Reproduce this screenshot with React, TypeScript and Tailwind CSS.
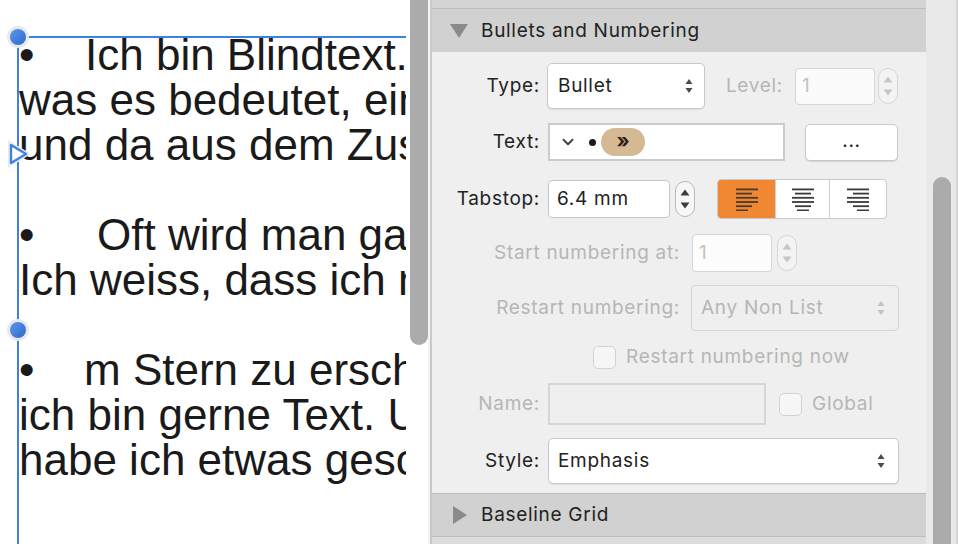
import React from "react";
import { ChevronDown } from "lucide-react";

function UpDown({ color = "#4a4a4a" }: { color?: string }) {
  return (
    <svg width="10" height="18" viewBox="0 0 10 18">
      <path d="M5 2 L8.5 7 L1.5 7 Z" fill={color} />
      <path d="M5 16 L8.5 11 L1.5 11 Z" fill={color} />
    </svg>
  );
}

function Stepper({ disabled }: { disabled?: boolean }) {
  const c = disabled ? "#c6c6c6" : "#3c3c3c";
  return (
    <div
      className={
        disabled
          ? "w-[20px] h-[36px] rounded-full border border-[#d5d5d5] bg-[#f3f3f3] flex flex-col items-center justify-center gap-[6px]"
          : "w-[20px] h-[36px] rounded-full border border-[#b8b8b8] bg-[#f7f7f7] flex flex-col items-center justify-center gap-[6px]"
      }
    >
      <svg width="10" height="7" viewBox="0 0 10 7">
        <path d="M5 0.5 L9.5 6.5 L0.5 6.5 Z" fill={c} />
      </svg>
      <svg width="10" height="7" viewBox="0 0 10 7">
        <path d="M5 6.5 L9.5 0.5 L0.5 0.5 Z" fill={c} />
      </svg>
    </div>
  );
}

function AlignIcon({ kind, color }: { kind: "left" | "center" | "right"; color: string }) {
  const widths = [22, 16, 22, 22, 16, 12];
  return (
    <svg width="24" height="24" viewBox="0 0 24 24">
      {widths.map((w, i) => {
        const x = kind === "left" ? 1 : kind === "right" ? 23 - w : 12 - w / 2;
        return <rect key={i} x={x} y={1.5 + i * 4.2} width={w} height={1.8} fill={color} />;
      })}
    </svg>
  );
}

function Checkbox() {
  return <div className="w-[23px] h-[23px] rounded-[5px] border border-[#d2d2d2] bg-[#f6f6f6]" />;
}

function Handle() {
  return (
    <div className="w-[22px] h-[22px] rounded-full bg-[#e9e9e9] flex items-center justify-center">
      <div className="w-[16px] h-[16px] rounded-full bg-gradient-to-br from-[#5d97ea] to-[#2c68cf]" />
    </div>
  );
}

const lines: { bullet?: number; text: string }[] = [
  { bullet: 66, text: "Ich bin Blindtext. Von Geburt an." },
  { text: "was es bedeutet, ein blinder Text" },
  { text: "und da aus dem Zusammenhang" },
  { text: "" },
  { bullet: 78, text: "Oft wird man gar nicht erst gelesen." },
  { text: "Ich weiss, dass ich nie die Chance" },
  { text: "" },
  { bullet: 65, text: "m Stern zu erscheinen. Aber" },
  { text: "ich bin gerne Text. Und sollten Sie" },
  { text: "habe ich etwas geschafft" },
];

export default function App() {
  const ui = "font-['Inter',sans-serif]";
  return (
    <div className="w-[958px] h-[544px] flex overflow-hidden bg-white">
      {/* Canvas */}
      <div className="w-[410px] h-full relative bg-white">
        <div className="w-[406px] h-full overflow-hidden pt-[32px] pl-[19px] font-['Liberation_Sans',Arial,sans-serif] text-[44px] leading-[45px] text-[#1a1a1a] whitespace-nowrap">
          {lines.map((l, i) => (
            <div key={i} className="h-[45px]">
              {l.bullet ? (
                <span className="inline-block" style={{ width: l.bullet }}>
                  •
                </span>
              ) : null}
              {l.text}
            </div>
          ))}
        </div>
        {/* selection frame overlays */}
        <div className="absolute left-[17px] top-[36px] w-[389px] h-[2px] bg-[#3f80e0]" />
        <div className="absolute left-[17px] top-[36px] w-[2px] h-[508px] bg-[#3f80e0]" />
        <div className="absolute left-[7px] top-[26px]">
          <Handle />
        </div>
        <div className="absolute left-[7px] top-[319px]">
          <Handle />
        </div>
        <div className="absolute left-[6px] top-[139px]">
          <svg width="26" height="30" viewBox="0 0 26 30">
            <path d="M2 1 L25 15 L2 29 Z" fill="#ececec" />
            <path d="M5 6 L20 15 L5 24 Z" fill="#ffffff" stroke="#3f80e0" strokeWidth="2.4" strokeLinejoin="round" />
          </svg>
        </div>
      </div>

      {/* canvas scrollbar */}
      <div className="w-[18px] h-full bg-white">
        <div className="w-[18px] h-[345px] bg-[#ababab] rounded-b-full" />
      </div>
      <div className="w-[2px] h-full bg-[#f2f2f2]" />
      <div className="w-[2px] h-full bg-[#c9c9c9]" />

      {/* Panel */}
      <div className={`w-[494px] h-full flex flex-col bg-[#efefef] ${ui} text-[19px] tracking-[0.7px] text-[#222]`}>
        <div className="h-[9px] shrink-0 bg-[#d4d4d4] border-b border-[#bdbdbd]" />
        <div className="h-[43px] shrink-0 bg-[#d1d1d1] flex items-center">
          <svg width="18" height="16" viewBox="0 0 18 16" className="ml-[18px]">
            <path d="M0 1 L18 1 L9 15 Z" fill="#8a8a8a" />
          </svg>
          <span className="ml-[13px] mt-[1px]">Bullets and Numbering</span>
        </div>

        <div className="flex-1 flex flex-col">
          {/* Type */}
          <div className="mt-[10px] h-[48px] flex items-center">
            <div className="w-[108px] text-right">Type:</div>
            <div className="ml-[7px] w-[158px] h-[46px] bg-white rounded-[5px] border border-[#c9c9c9] shadow-[0_1px_1px_rgba(0,0,0,0.08)] flex items-center pl-[10px] pr-[10px] justify-between">
              <span>Bullet</span>
              <UpDown />
            </div>
            <div className="w-[78px] text-right text-[#b6b6b6]">Level:</div>
            <div className="ml-[12px] w-[80px] h-[37px] bg-[#fbfbfb] rounded-[4px] border border-[#d6d6d6] flex items-center pl-[6px] text-[#c2c2c2]">
              1
            </div>
            <div className="ml-[3px]">
              <Stepper disabled />
            </div>
          </div>

          {/* Text */}
          <div className="mt-[12px] h-[40px] flex items-center">
            <div className="w-[108px] text-right">Text:</div>
            <div className="ml-[8px] w-[237px] h-[38px] bg-white border-2 border-[#cbcbcb] flex items-center pl-[9px]">
              <ChevronDown size={18} strokeWidth={2.6} color="#444" />
              <span className="ml-[12px] w-[7px] h-[7px] rounded-full bg-[#1c1c1c]" />
              <span className="ml-[5px] w-[44px] h-[28px] rounded-full bg-[#d5b994] flex items-center justify-center text-[20px] tracking-normal font-bold leading-none text-[#2a2015] pb-[2px]">
                »
              </span>
            </div>
            <div className="ml-[20px] w-[93px] h-[37px] bg-white rounded-[5px] border border-[#cacaca] shadow-[0_1px_1px_rgba(0,0,0,0.12)] flex items-center justify-center pb-[2px]">
              ...
            </div>
          </div>

          {/* Tabstop */}
          <div className="mt-[17px] h-[40px] flex items-center">
            <div className="w-[108px] text-right">Tabstop:</div>
            <div className="ml-[8px] w-[122px] h-[38px] bg-white rounded-[4px] border border-[#c6c6c6] flex items-center pl-[8px]">
              6.4 mm
            </div>
            <div className="ml-[5px]">
              <Stepper />
            </div>
            <div className="ml-[22px] w-[170px] h-[40px] rounded-[4px] border border-[#c9c9c9] bg-white flex overflow-hidden">
              <div className="w-[57px] h-full bg-[#f08833] flex items-center justify-center">
                <AlignIcon kind="left" color="#4a3a2c" />
              </div>
              <div className="w-[54px] h-full border-l border-[#d0d0d0] flex items-center justify-center">
                <AlignIcon kind="center" color="#3a3a3a" />
              </div>
              <div className="flex-1 h-full border-l border-[#d0d0d0] flex items-center justify-center">
                <AlignIcon kind="right" color="#3a3a3a" />
              </div>
            </div>
          </div>

          {/* Start numbering at */}
          <div className="mt-[14px] h-[40px] flex items-center">
            <div className="w-[248px] text-right text-[#b6b6b6]">Start numbering at:</div>
            <div className="ml-[12px] w-[80px] h-[38px] bg-[#fcfcfc] rounded-[4px] border border-[#d6d6d6] flex items-center pl-[6px] text-[#c2c2c2]">
              1
            </div>
            <div className="ml-[5px]">
              <Stepper disabled />
            </div>
          </div>

          {/* Restart numbering */}
          <div className="mt-[11px] h-[48px] flex items-center">
            <div className="w-[248px] text-right text-[#b6b6b6]">Restart numbering:</div>
            <div className="ml-[11px] w-[208px] h-[46px] bg-[#efefef] rounded-[4px] border border-[#d6d6d6] flex items-center justify-between pl-[9px] pr-[12px] text-[#b6b6b6]">
              <span>Any Non List</span>
              <UpDown color="#c2c2c2" />
            </div>
          </div>

          {/* Restart numbering now */}
          <div className="mt-[13px] h-[24px] flex items-center">
            <div className="ml-[161px]">
              <Checkbox />
            </div>
            <span className="ml-[10px] text-[#b6b6b6]">Restart numbering now</span>
          </div>

          {/* Name */}
          <div className="mt-[13px] h-[44px] flex items-center">
            <div className="w-[108px] text-right text-[#b6b6b6]">Name:</div>
            <div className="ml-[8px] w-[218px] h-[42px] bg-[#efefef] border-2 border-[#d6d6d6]" />
            <div className="ml-[13px]">
              <Checkbox />
            </div>
            <span className="ml-[10px] text-[#b6b6b6]">Global</span>
          </div>

          {/* Style */}
          <div className="mt-[11px] h-[48px] flex items-center">
            <div className="w-[108px] text-right">Style:</div>
            <div className="ml-[8px] w-[351px] h-[46px] bg-white rounded-[5px] border border-[#c9c9c9] shadow-[0_1px_1px_rgba(0,0,0,0.08)] flex items-center justify-between pl-[9px] pr-[12px]">
              <span>Emphasis</span>
              <UpDown />
            </div>
          </div>
        </div>

        <div className="h-[44px] shrink-0 bg-[#d1d1d1] border-t border-b border-[#bdbdbd] flex items-center">
          <svg width="16" height="18" viewBox="0 0 16 18" className="ml-[20px]">
            <path d="M1 0 L15 9 L1 18 Z" fill="#8a8a8a" />
          </svg>
          <span className="ml-[13px] mt-[1px]">Baseline Grid</span>
        </div>
        <div className="h-[7px] shrink-0 bg-[#dcdcdc]" />
      </div>

      {/* panel scrollbar */}
      <div className="w-[30px] h-full bg-[#e9e9e9] flex flex-col pt-[177px] pl-[7px]">
        <div className="w-[18px] flex-1 bg-[#ababab] rounded-t-full" />
      </div>
      <div className="w-[2px] h-full bg-[#d6d6d6]" />
    </div>
  );
}
